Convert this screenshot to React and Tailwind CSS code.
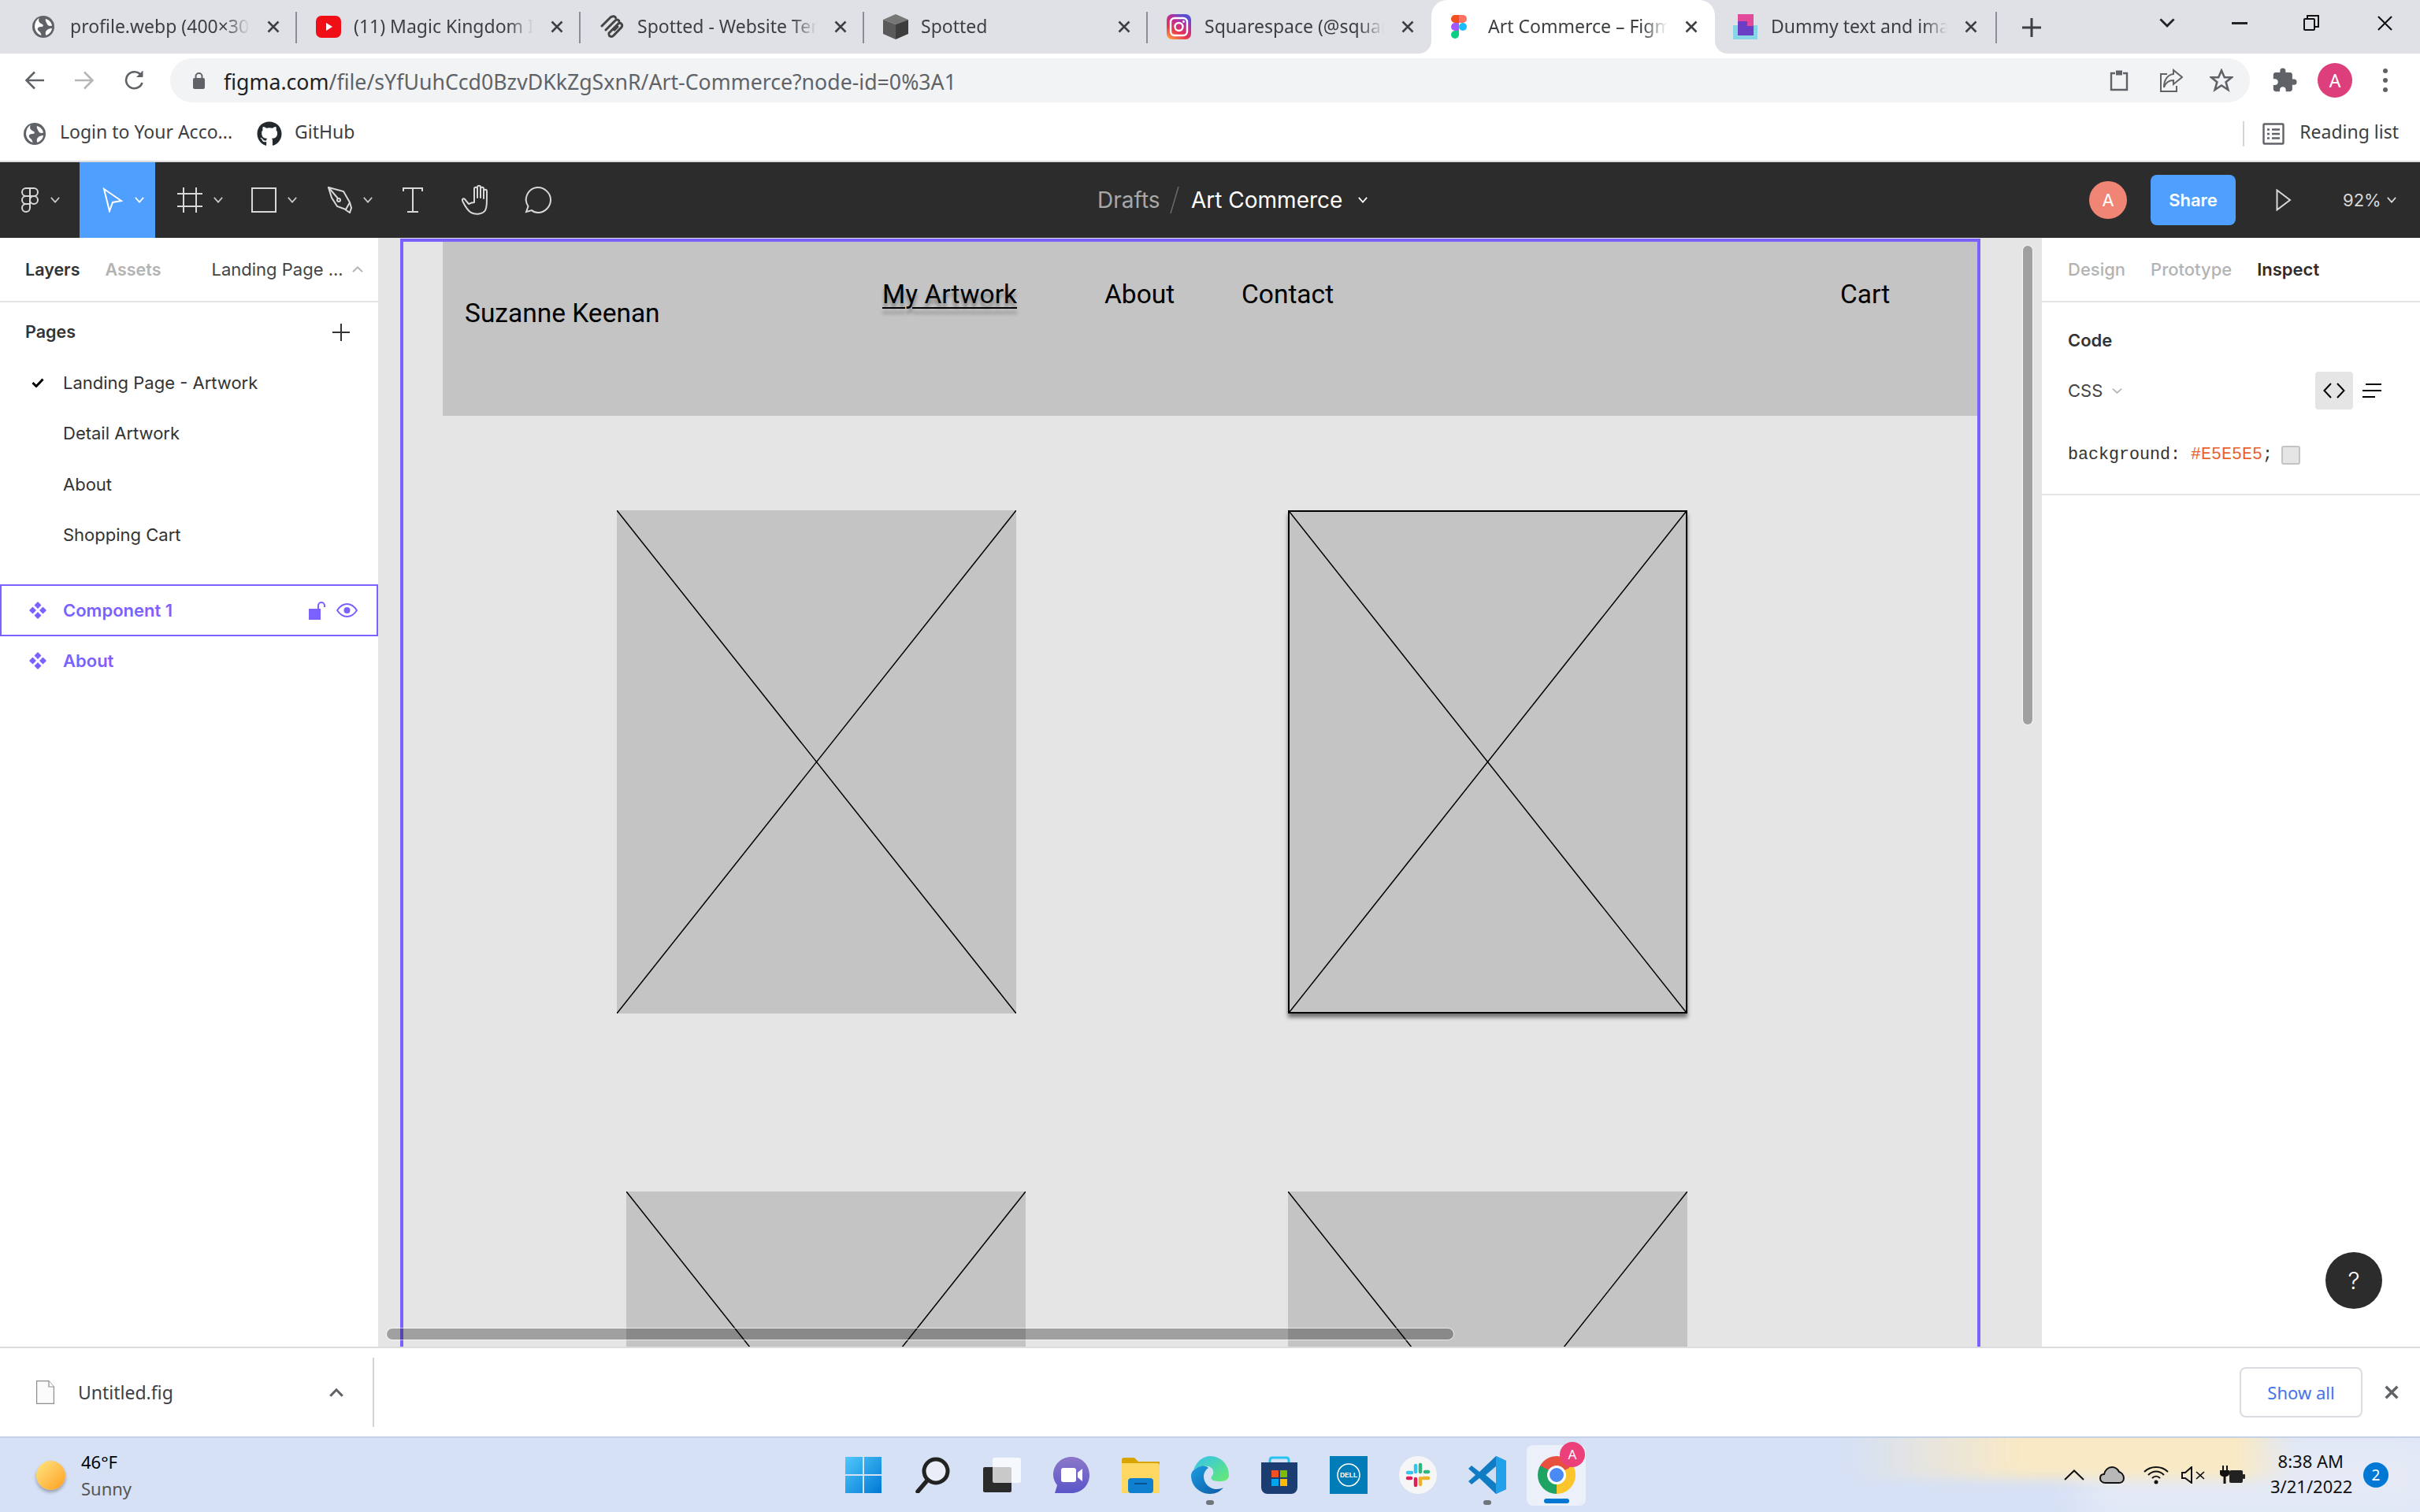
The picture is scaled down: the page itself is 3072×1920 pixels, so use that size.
import React from 'react';
import { FaGithub } from 'react-icons/fa';
import { MdExtension } from 'react-icons/md';

// ---- small helpers ----
const Chev = ({ className = '', up = false, color = '#d4d4d4', w = 14, h = 9, sw = 2 }) => (
  <svg className={`shrink-0 ${className}`} width={w} height={h} viewBox="0 0 14 9" fill="none" preserveAspectRatio="none">
    <path d={up ? 'M1 8L7 1.5L13 8' : 'M1 1L7 7.5L13 1'} stroke={color} strokeWidth={sw} />
  </svg>
);

const CloseX = ({ className = '', color = '#3c4043', size = 16, sw = 2.6 }) => (
  <svg className={`shrink-0 ${className}`} width={size} height={size} viewBox="0 0 16 16" fill="none">
    <path d="M1.5 1.5L14.5 14.5M14.5 1.5L1.5 14.5" stroke={color} strokeWidth={sw} />
  </svg>
);

const Globe = ({ size = 28 }) => (
  <svg className="shrink-0" width={size} height={size} viewBox="0 0 28 28">
    <circle cx="14" cy="14" r="14" fill="#5f6368" />
    <path d="M9 2.5C7 6 8.5 9 12 10.5C15 11.5 14 14 11.5 14C8 14 6 15.5 7 18C8 20 11 20.5 11.5 25C8 24 3.5 20.5 3 14C3 9 5 5 9 2.5ZM17 4C21 5 24.5 8.5 25 12.5C22 13.5 19.5 12.5 18.5 10C18 8 16 6.5 17 4ZM25 16C24.5 20 21.5 23.5 17.5 25C16 22 17 19 19.5 17.5C21.5 16.5 23 16 25 16Z" fill="#fff" />
  </svg>
);

const YouTube = () => (
  <svg className="shrink-0" width="32" height="28" viewBox="0 0 32 28">
    <rect width="32" height="28" rx="7" fill="#f00f16" />
    <path d="M13 9L21 14L13 19Z" fill="#fff" />
  </svg>
);

const Squarespace = () => (
  <svg className="shrink-0" width="32" height="32" viewBox="0 0 32 32" fill="none" stroke="#444" strokeWidth="3" strokeLinecap="round">
    <path d="M3 15L14 4C17 1.5 20 3 20.5 4.5M8 20L20 8C22 6 25 7 25 10M12 24L24 12C27 10 30 13 28 16.5L18 27C15.5 29.5 12.5 28.5 12 26M6 12L13 5M19 20L23 16" />
  </svg>
);

const Cube = () => (
  <svg className="shrink-0" width="32" height="32" viewBox="0 0 32 32">
    <path d="M16 0L32 7L16 13L0 7Z" fill="#777" />
    <path d="M0 7L16 13V32L0 25Z" fill="#5a5a5a" />
    <path d="M32 7L16 13V32L32 25Z" fill="#3d3d3d" />
  </svg>
);

const Instagram = () => (
  <svg className="shrink-0" width="31" height="32" viewBox="0 0 31 32">
    <defs>
      <linearGradient id="ig" x1="0" y1="1" x2="0.6" y2="0">
        <stop offset="0" stopColor="#fdb040" />
        <stop offset="0.4" stopColor="#e8354f" />
        <stop offset="0.75" stopColor="#b82f9e" />
        <stop offset="1" stopColor="#5a4fd0" />
      </linearGradient>
    </defs>
    <rect width="31" height="32" rx="7" fill="url(#ig)" />
    <rect x="5" y="5" width="21" height="22" rx="5" fill="none" stroke="#fff" strokeWidth="2.4" />
    <circle cx="15.5" cy="16" r="5" fill="none" stroke="#fff" strokeWidth="2.4" />
    <circle cx="21.5" cy="9.5" r="1.4" fill="#fff" />
  </svg>
);

const FigmaColor = () => (
  <svg className="shrink-0" width="22" height="30" viewBox="0 0 20 30">
    <path d="M10 0H5a5 5 0 0 0 0 10h5Z" fill="#f24e1e" />
    <path d="M10 0h5a5 5 0 0 1 0 10h-5Z" fill="#ff7262" />
    <path d="M10 10H5a5 5 0 0 0 0 10h5Z" fill="#a259ff" />
    <circle cx="15" cy="15" r="5" fill="#1abcfe" />
    <path d="M10 20H5a5 5 0 1 0 5 5Z" fill="#0acf83" />
  </svg>
);

const DummyLogo = () => (
  <svg className="shrink-0" width="31" height="32" viewBox="0 0 31 32">
    <rect x="0" y="14" width="31" height="18" fill="#86d6e6" />
    <rect x="6" y="0" width="20" height="16" fill="#e2489b" />
    <path d="M6 9H18V15H26V27H6Z" fill="#6b3fc4" />
  </svg>
);

const Tab = ({ icon, title, sep = true, active = false }) => (
  <div className={`relative flex h-[68px] w-[360px] shrink-0 items-center pl-[24px] ${active ? 'rounded-t-[20px] bg-white' : ''}`}>
    {active && <span className="absolute bottom-0 left-[-16px] h-4 w-4 bg-[radial-gradient(circle_at_0_0,transparent_15.5px,white_16.5px)]" />}
    {active && <span className="absolute bottom-0 right-[-16px] h-4 w-4 bg-[radial-gradient(circle_at_100%_0,transparent_15.5px,white_16.5px)]" />}
    <span className="flex w-[48px] shrink-0 items-center">{icon}</span>
    <span className="w-[240px] shrink-0 -translate-y-[1px] whitespace-nowrap text-[23px] leading-[30px] text-[#3c4043] [mask-image:linear-gradient(to_right,black_82%,transparent_95%)]">{title}</span>
    <CloseX className="ml-[10px]" />
    {sep && <span className="absolute right-0 top-[15px] h-10 w-[2px] bg-[#8c9096]" />}
  </div>
);

const TabStrip = () => (
  <div className="flex h-[68px] shrink-0 bg-[#dfe1e6] pl-[17px]">
    <Tab icon={<Globe />} title="profile.webp (400×30" />
    <Tab icon={<YouTube />} title="(11) Magic Kingdom It" />
    <Tab icon={<Squarespace />} title="Spotted - Website Ten" />
    <Tab icon={<Cube />} title="Spotted" />
    <Tab icon={<Instagram />} title="Squarespace (@squar" sep={false} />
    <Tab icon={<FigmaColor />} title="Art Commerce – Figm" sep={false} active />
    <div className="relative flex h-[68px] w-[358px] shrink-0 items-center pl-[23px]">
      <span className="flex w-[48px] shrink-0 items-center"><DummyLogo /></span>
      <span className="w-[236px] shrink-0 -translate-y-[1px] whitespace-nowrap text-[23px] leading-[30px] text-[#3c4043] [mask-image:linear-gradient(to_right,black_82%,transparent_95%)]">Dummy text and imag</span>
      <CloseX className="ml-[10px]" />
      <span className="absolute right-0 top-[15px] h-10 w-[2px] bg-[#8c9096]" />
    </div>
    <svg className="ml-[31px] mt-[22px] shrink-0" width="26" height="26" viewBox="0 0 26 26"><path d="M13 1V25M1 13H25" stroke="#3c4043" strokeWidth="3" /></svg>
    <div className="ml-[149px] mt-[23px] flex items-start">
      <Chev color="#222" w={20} h={12} />
      <span className="ml-[72px] mt-[5px] h-[3px] w-5 bg-[#222]" />
      <svg className="ml-[71px] mt-[-4px]" width="20" height="20" viewBox="0 0 20 20" fill="none" stroke="#111" strokeWidth="2"><rect x="1" y="5" width="13" height="14" rx="1" /><path d="M5 5V1H19V15H14" /></svg>
      <CloseX className="ml-[73px] mt-[-4px]" color="#111" size={21} sw={1.6} />
    </div>
  </div>
);

const AddressRow = () => (
  <div className="flex h-[68px] shrink-0 items-center bg-white">
    <svg className="ml-[31px]" width="26" height="24" viewBox="0 0 26 24" fill="none" stroke="#5f6368" strokeWidth="2.6"><path d="M25 12H3M13 1.5L2.5 12L13 22.5" /></svg>
    <svg className="ml-[37px]" width="26" height="24" viewBox="0 0 26 24" fill="none" stroke="#b4b6b9" strokeWidth="2.6"><path d="M1 12H23M13 1.5L23.5 12L13 22.5" /></svg>
    <svg className="ml-[38px]" width="26" height="26" viewBox="0 0 26 26" fill="none" stroke="#5f6368" strokeWidth="2.6"><path d="M22.5 16A10.5 10.5 0 1 1 21 6.5" /><path d="M23 1V8.5H15.5" fill="#5f6368" strokeWidth="1" /></svg>
    <div className="ml-[32px] flex h-14 w-[2640px] items-center rounded-full bg-[#f1f3f5] pl-[29px]">
      <svg width="15" height="22" viewBox="0 0 15 22"><path d="M3.5 9V6a4 4 0 0 1 8 0v3" fill="none" stroke="#5f6368" strokeWidth="2" /><rect y="8" width="15" height="14" rx="2" fill="#5f6368" /></svg>
      <span className="ml-[24px] translate-y-[2px] whitespace-nowrap text-[26.7px] leading-[36px] text-[#5f6368]"><span className="text-[#202124]">figma.com</span>/file/sYfUuhCcd0BzvDKkZgSxnR/Art-Commerce?node-id=0%3A1</span>
      <svg className="ml-auto" width="24" height="28" viewBox="0 0 24 28" fill="none" stroke="#5f6368" strokeWidth="2.4"><path d="M7 5H2V26H22V5H17" /><rect x="8" y="1.5" width="8" height="6" fill="#5f6368" stroke="none" /></svg>
      <svg className="ml-[39px]" width="30" height="30" viewBox="0 0 30 30" fill="none" stroke="#5f6368" strokeWidth="2"><path d="M10 7H2V29H22V22" /><path d="M18 2L29 11L18 20V15C12 15 8 18 6 24C6 15 10 8 18 7Z" /></svg>
      <svg className="ml-[34px]" width="30" height="30" viewBox="0 0 30 30" fill="none" stroke="#5f6368" strokeWidth="2.6"><path d="M15 2.5L18.8 11.2H28L20.6 17.2L23.4 27L15 21.5L6.6 27L9.4 17.2L2 11.2H11.2Z" /></svg>
      <span className="mr-[21px] w-0" />
    </div>
    <MdExtension className="ml-[27px] shrink-0 text-[#5f6368]" size={34} />
    <span className="ml-[25px] flex h-11 w-11 shrink-0 items-center justify-center rounded-full bg-[#dc3f7c] text-[23px] text-white">A</span>
    <span className="ml-[39px] flex shrink-0 flex-col gap-[6px]">
      <i className="block h-[6px] w-[6px] rounded-full bg-[#5f6368]" />
      <i className="block h-[6px] w-[6px] rounded-full bg-[#5f6368]" />
      <i className="block h-[6px] w-[6px] rounded-full bg-[#5f6368]" />
    </span>
  </div>
);

const BookmarkRow = () => (
  <div className="flex h-[68px] shrink-0 items-center bg-white pl-[30px] text-[23px] text-[#3c4043]">
    <Globe />
    <span className="ml-[18px] w-[217px] -translate-y-[3px] whitespace-nowrap">Login to Your Acco...</span>
    <FaGithub className="ml-[33px] shrink-0 text-[#24292e]" size={32} />
    <span className="ml-[16px] -translate-y-[3px] whitespace-nowrap">GitHub</span>
    <span className="ml-auto h-8 w-[2px] bg-[#d4d4d4]" />
    <svg className="ml-[23px]" width="28" height="28" viewBox="0 0 28 28" fill="none" stroke="#5f6368" strokeWidth="2.4"><rect x="1.5" y="1.5" width="25" height="25" rx="1" /><path d="M6 8.5H9M12 8.5H22M6 14H9M12 14H22M6 19.5H9M12 19.5H22" /></svg>
    <span className="ml-[19px] mr-[27px] -translate-y-[3px] whitespace-nowrap">Reading list</span>
  </div>
);

// ---- figma toolbar ----
const ToolIcon = ({ children, chev = true, className = '' }) => (
  <div className={`flex items-center ${className}`}>
    {children}
    {chev && <Chev className="ml-[14px]" color="#c8c8c8" w={12} h={8} />}
  </div>
);

const FigmaToolbar = () => (
  <div className="flex h-[96px] shrink-0 items-center border-t-0 bg-[#2c2c2c] font-['Inter',sans-serif]">
    <ToolIcon className="ml-[26px]">
      <svg width="24" height="32" viewBox="0 0 24 32" fill="none" stroke="#d8d8d8" strokeWidth="2"><path d="M12 1H7a5 5 0 0 0 0 10h5ZM12 1h5a5 5 0 0 1 0 10h-5ZM12 11H7a5 5 0 0 0 0 10h5Z" /><circle cx="17" cy="16" r="5" /><path d="M12 21H7a5 5 0 1 0 5 5Z" /></svg>
    </ToolIcon>
    <div className="ml-[25px] flex h-[96px] w-[96px] items-center bg-[#4f9fff] pl-[29px]">
      <svg width="26" height="32" viewBox="0 0 26 32" fill="none" stroke="#fff" strokeWidth="2"><path d="M2 2L24 17L13 19L9 30Z" /></svg>
      <Chev className="ml-[15px]" color="#fff" w={12} h={8} />
    </div>
    <ToolIcon className="ml-[28px]">
      <svg width="32" height="32" viewBox="0 0 32 32" fill="none" stroke="#d8d8d8" strokeWidth="2"><path d="M8 0V32M24 0V32M0 8H32M0 24H32" /></svg>
    </ToolIcon>
    <ToolIcon className="ml-[36px]">
      <svg width="32" height="32" viewBox="0 0 32 32" fill="none" stroke="#d8d8d8" strokeWidth="2"><rect x="1" y="1" width="30" height="30" /></svg>
    </ToolIcon>
    <ToolIcon className="ml-[39px]">
      <svg width="31" height="34" viewBox="0 0 31 34" fill="none" stroke="#d8d8d8" strokeWidth="2"><path d="M1 1L20 6L28 20L23 29L12 25L5 14Z" /><path d="M1 1L13 15" /><circle cx="14" cy="17" r="2" /><path d="M22 29L28 33L30 27L28 20" /></svg>
    </ToolIcon>
    <ToolIcon chev={false} className="ml-[38px]">
      <svg width="26" height="32" viewBox="0 0 26 32" fill="none" stroke="#d8d8d8" strokeWidth="2"><path d="M0 1H26M13 1V31M6 31H20" /><path d="M1 1V5M25 1V5" /></svg>
    </ToolIcon>
    <ToolIcon chev={false} className="ml-[49px]">
      <svg width="36" height="38" viewBox="0 0 36 38" fill="none" stroke="#d8d8d8" strokeWidth="2" strokeLinecap="round" strokeLinejoin="round"><path d="M9 24L4 18C2 16 0 18 1.500 21C4 26 7 32 12 35C18 38 27 37 30 32C32 28 32 24 32 8C32 5 28 5 28 8V17V5C28 2 24 2 24 5V16V3C24 0 20 0 20 3V16V5C20 2 16 2 16 5V22C13 22 11 23 9 24Z" /></svg>
    </ToolIcon>
    <ToolIcon chev={false} className="ml-[44px]">
      <svg width="34" height="34" viewBox="0 0 34 34" fill="none" stroke="#d8d8d8" strokeWidth="2"><path d="M2 32L4.500 25C2 21 1 18 2 14C3.500 6 10 1 17 1C25 1 33 8 33 17C33 25 26 33 17 33C14 33 11 32 9 30Z" /></svg>
    </ToolIcon>

    {/* title sits in the middle of the bar */}
    <div className="ml-[693px] flex items-center text-[28px] leading-[34px]">
      <span className="w-[80px] whitespace-nowrap text-[#a8a8a8]">Drafts</span>
      <svg className="ml-[10px]" width="14" height="34" viewBox="0 0 14 34"><path d="M13 0L3 34" stroke="#6a6a6a" strokeWidth="1.5" /></svg>
      <span className="ml-[15px] w-[191px] whitespace-nowrap text-white">Art Commerce</span>
      <Chev className="ml-[21px]" color="#fff" w={12} h={8} />
    </div>

    <span className="ml-auto flex h-12 w-12 items-center justify-center rounded-full bg-[#f08575] text-[22px] text-white">A</span>
    <span className="ml-[30px] flex h-16 w-[108px] items-center justify-center rounded-lg bg-[#4f9fff] text-[22px] font-semibold text-white">Share</span>
    <svg className="ml-[51px]" width="20" height="28" viewBox="0 0 20 28" fill="none" stroke="#d8d8d8" strokeWidth="2"><path d="M1.500 1.500L18 14L1.500 26.500Z" /></svg>
    <span className="ml-[65px] w-[44px] whitespace-nowrap text-[22px] text-[#d8d8d8]">92%</span>
    <Chev className="ml-[12px] mr-[30px]" color="#d8d8d8" w={12} h={8} />
  </div>
);

// ---- layers panel ----
const ComponentGlyph = () => (
  <svg className="shrink-0" width="22" height="22" viewBox="0 0 22 22" fill="#7b61ff">
    <path d="M11 0L15.500 4.500L11 9L6.500 4.500ZM11 13L15.500 17.500L11 22L6.500 17.500ZM4.500 6.500L9 11L4.500 15.500L0 11ZM17.500 6.500L22 11L17.500 15.500L13 11Z" />
  </svg>
);

const PageRow = ({ name, checked }) => (
  <div className="flex h-[64.5px] items-center">
    <span className="flex w-[80px] justify-center pl-[16px]">
      {checked && <svg className="mr-[0px]" width="16" height="12" viewBox="0 0 16 12" fill="none"><path d="M1.500 6L6 10.500L14.500 1.500" stroke="#000" strokeWidth="3" /></svg>}
    </span>
    <span className="whitespace-nowrap text-[#333]">{name}</span>
  </div>
);

const LeftPanel = () => (
  <aside className="flex w-[480px] shrink-0 flex-col bg-white font-['Inter',sans-serif] text-[22px]">
    <div className="flex h-[82px] shrink-0 items-center border-b-2 border-[#e5e5e5] pl-[32px]">
      <span className="text-[21.5px] font-semibold text-[#333]">Layers</span>
      <span className="ml-[32px] text-[21.5px] font-semibold text-[#b3b3b3]">Assets</span>
      <span className="ml-[64px] whitespace-nowrap text-[#444]">Landing Page ...</span>
      <Chev className="ml-[11px]" up color="#b3b3b3" w={14} h={8} />
    </div>
    <div className="flex h-[70px] shrink-0 items-center pl-[32px] pr-[36px] pt-[5px]">
      <span className="text-[21.5px] font-semibold text-[#333]">Pages</span>
      <svg className="ml-auto" width="22" height="22" viewBox="0 0 22 22"><path d="M11 0V22M0 11H22" stroke="#333" strokeWidth="2" /></svg>
    </div>
    <PageRow name="Landing Page - Artwork" checked />
    <PageRow name="Detail Artwork" />
    <PageRow name="About" />
    <PageRow name="Shopping Cart" />
    <div className="mt-[30px] flex h-[66px] shrink-0 items-center border-2 border-[#7b61ff] pl-[35px] font-semibold text-[#7b61ff]">
      <ComponentGlyph />
      <span className="ml-[21px] whitespace-nowrap">Component 1</span>
      <svg className="ml-auto" width="21" height="23" viewBox="0 0 21 23"><rect y="9" width="15" height="14" fill="#7b61ff" /><path d="M12 9V5a4 4 0 0 1 8 0v2" fill="none" stroke="#7b61ff" strokeWidth="2" /></svg>
      <svg className="ml-[14px] mr-[24px]" width="27" height="18" viewBox="0 0 27 18"><path d="M1 9C5 3 9 1 13.500 1S22 3 26 9C22 15 18 17 13.500 17S5 15 1 9Z" fill="none" stroke="#7b61ff" strokeWidth="2" /><circle cx="13.500" cy="9" r="4" fill="#7b61ff" /></svg>
    </div>
    <div className="flex h-[62px] shrink-0 items-center pl-[37px] font-semibold text-[#7b61ff]">
      <ComponentGlyph />
      <span className="ml-[21px]">About</span>
    </div>
  </aside>
);

// ---- canvas ----
const Placeholder = ({ className = '' }) => (
  <div className={`h-[639px] w-[507px] shrink-0 bg-[#c4c4c4] ${className}`}>
    <svg className="block h-full w-full" viewBox="0 0 507 639" preserveAspectRatio="none" fill="none">
      <path d="M0 0L507 639M507 0L0 639" stroke="#000" strokeWidth="1.5" />
    </svg>
  </div>
);

const Canvas = () => (
  <main className="relative min-w-0 flex-1 overflow-hidden bg-[#e5e5e5] font-['Roboto',sans-serif] text-[33.500px] leading-[42px] text-black">
    <div className="ml-[28px] mt-[1px] h-full w-[2006px] border-x-4 border-t-4 border-[#7b61ff]">
      <div className="ml-[50px] flex h-[221px] bg-[#c4c4c4]">
        <span className="ml-[28px] mt-[70px] w-[250px] whitespace-nowrap">Suzanne Keenan</span>
        <span className="ml-[280px] mt-[46px] w-[170px] whitespace-nowrap underline decoration-2 underline-offset-[5px] [text-shadow:0_6px_4px_rgba(0,0,0,0.35)]">My Artwork</span>
        <span className="ml-[112px] mt-[46px] w-[89px]">About</span>
        <span className="ml-[85px] mt-[46px] w-[117px]">Contact</span>
        <span className="ml-[643px] mt-[46px]">Cart</span>
      </div>
      <div className="ml-[271px] mt-[120px] flex">
        <Placeholder />
        <Placeholder className="ml-[345px] border-2 border-black shadow-[0_5px_5px_rgba(0,0,0,0.5)]" />
      </div>
      <div className="ml-[283px] mt-[226px] flex">
        <Placeholder />
        <Placeholder className="ml-[333px]" />
      </div>
    </div>
    {/* overlay scrollbars */}
    <div className="absolute left-[11px] top-[1385px] h-[14px] w-[1354px] rounded-full bg-black/30 ring-1 ring-white/60" />
    <div className="absolute left-[2088px] top-[10px] h-[608px] w-[12px] rounded-full bg-black/30 ring-1 ring-white/60" />
  </main>
);

// ---- inspect panel ----
const RightPanel = () => (
  <aside className="relative w-[480px] shrink-0 bg-white font-['Inter',sans-serif] text-[22px]">
    <div className="flex h-[82px] items-center border-b-2 border-[#e5e5e5] pl-[33px] font-medium">
      <span className="text-[#b3b3b3]">Design</span>
      <span className="ml-[32px] text-[#b3b3b3]">Prototype</span>
      <span className="ml-[32px] font-semibold text-[#2c2c2c]">Inspect</span>
    </div>
    <div className="h-[245px] border-b-2 border-[#e5e5e5] pl-[33px]">
      <div className="pt-[35px] font-semibold leading-[26px] text-[#333]">Code</div>
      <div className="mt-[27px] flex h-12 items-center">
        <span className="text-[#444]">CSS</span>
        <Chev className="ml-[12px]" color="#b3b3b3" w={13} h={7} />
        <span className="ml-[245px] flex h-12 w-12 items-center justify-center rounded-[4px] bg-[#e5e5e5]">
          <svg width="28" height="20" viewBox="0 0 28 20" fill="none" stroke="#000" strokeWidth="2"><path d="M10 1L1.500 10L10 19M18 1L26.500 10L18 19" /></svg>
        </span>
        <svg className="ml-[12px]" width="24" height="18" viewBox="0 0 24 18" fill="none" stroke="#000" strokeWidth="2"><path d="M4 1H24M0 9H24M0 17H16" /></svg>
      </div>
      <div className="mt-[46px] flex items-center font-['Liberation_Mono',monospace] text-[21.67px] leading-[24px] text-[#333]">
        <span className="whitespace-pre">background: <span className="text-[#e8602c]">#E5E5E5</span>;</span>
        <span className="ml-[11px] h-6 w-6 rounded-[3px] border-2 border-[#c4c4c4] bg-[#e5e5e5]" />
      </div>
    </div>
    <span className="absolute left-[360px] top-[1288px] flex h-[72px] w-[72px] items-center justify-center rounded-full bg-[#2c2c2c] text-[30px] font-light text-white">?</span>
  </aside>
);

const DownloadBar = () => (
  <div className="flex h-[114px] shrink-0 items-center border-t-2 border-[#dcdcdc] bg-white text-[23px] text-[#3c4043]">
    <svg className="ml-[46px]" width="23" height="30" viewBox="0 0 23 30" fill="#fbfbfb" stroke="#8a8d91" strokeWidth="1.200"><path d="M0.600 0.600H16L22.400 8V29.400H0.600Z" /><path d="M16 0.600V8H22.400" /></svg>
    <span className="ml-[30px] w-[130px] whitespace-nowrap">Untitled.fig</span>
    <Chev className="ml-[189px]" up color="#5f6368" w={18} h={11} sw={2.4} />
    <span className="ml-[37px] h-[88px] w-[2px] bg-[#d4d4d4]" />
    <span className="ml-auto flex h-16 w-[156px] items-center justify-center rounded-lg border-2 border-[#dadce0] text-[22px] text-[#4473e8]">Show all</span>
    <CloseX className="ml-[28px] mr-[27px]" color="#5f6368" size={18} sw={3} />
  </div>
);

// ---- taskbar glyphs ----
const WinStart = () => (
  <svg width="46" height="46" viewBox="0 0 46 46">
    <defs><linearGradient id="win" x1="0" y1="0" x2="1" y2="1"><stop offset="0" stopColor="#4fc8fb" /><stop offset="1" stopColor="#0078d4" /></linearGradient></defs>
    <path d="M0 0H22V22H0ZM24 0H46V22H24ZM0 24H22V46H0ZM24 24H46V46H24Z" fill="url(#win)" />
  </svg>
);
const SearchIcon = () => (
  <svg width="44" height="46" viewBox="0 0 44 46" fill="none"><circle cx="26" cy="18" r="15" fill="#e9eef8" stroke="#222" strokeWidth="5" /><path d="M15 30L3 44" stroke="#222" strokeWidth="5.500" strokeLinecap="round" /></svg>
);
const TaskView = () => (
  <svg width="48" height="44" viewBox="0 0 48 44"><rect y="12" width="36" height="32" rx="2" fill="#2b2b2b" /><rect x="12" width="36" height="32" rx="2" fill="#fff" fillOpacity="0.75" /></svg>
);
const ChatIcon = () => (
  <svg width="46" height="46" viewBox="0 0 46 46"><defs><linearGradient id="chat" x1="0" y1="0" x2="0" y2="1"><stop offset="0" stopColor="#8c78c8" /><stop offset="1" stopColor="#5a55c8" /></linearGradient></defs><path d="M23 0C36 0 46 10 46 23S36 46 23 46H2L5 36C2 32 0 28 0 23C0 10 10 0 23 0Z" fill="url(#chat)" /><rect x="10" y="14" width="19" height="18" rx="3" fill="#fff" /><path d="M31 20L37 15V31L31 26Z" fill="#fff" /></svg>
);
const FolderIcon = () => (
  <svg width="48" height="46" viewBox="0 0 48 46"><path d="M0 4a3 3 0 0 1 3-3H16L21 6H48V12H0Z" fill="#d9a300" /><path d="M0 8H45a3 3 0 0 1 3 3V46H0Z" fill="#ffd763" /><rect x="8" y="27" width="32" height="19" rx="4" fill="#0f7fd0" /><path d="M16 34H32" stroke="#07518f" strokeWidth="2" /></svg>
);
const EdgeIcon = () => (
  <svg width="48" height="48" viewBox="0 0 48 48"><defs><linearGradient id="edgeA" x1="0" y1="0" x2="1" y2="1"><stop offset="0" stopColor="#35c1f1" /><stop offset="1" stopColor="#66eb6e" /></linearGradient><linearGradient id="edgeB" x1="0" y1="0" x2="1" y2="1"><stop offset="0" stopColor="#1b9de2" /><stop offset="1" stopColor="#0c59a4" /></linearGradient></defs><path d="M3 18C7 6 16 0 24 0C38 0 48 11 48 24C48 31 42 32 36 32C30 32 24 31 26 26C30 22 29 14 21 13C12 12 5 15 3 18Z" fill="url(#edgeA)" /><path d="M3 18C9 12 17 11 22 15C19 17 16 21 16 26C16 35 24 42 32 42C36 42 39 41 41 40C37 45 31 48 24 48C10 48 0 37 0 25C0 22 1 20 3 18Z" fill="url(#edgeB)" /></svg>
);
const StoreIcon = () => (
  <svg width="46" height="48" viewBox="0 0 46 48"><path d="M11 10V5a3 3 0 0 1 3-3H32a3 3 0 0 1 3 3V10" fill="none" stroke="#27c3f0" strokeWidth="3" /><path d="M0 8H46V40a8 8 0 0 1-8 8H8a8 8 0 0 1-8-8Z" fill="#1b3d72" /><rect x="13" y="18" width="9" height="9" fill="#f25022" /><rect x="24" y="18" width="9" height="9" fill="#7fba00" /><rect x="13" y="29" width="9" height="9" fill="#00a4ef" /><rect x="24" y="29" width="9" height="9" fill="#ffb900" /></svg>
);
const DellIcon = () => (
  <svg width="48" height="48" viewBox="0 0 48 48"><rect width="48" height="48" fill="#007db8" /><circle cx="24" cy="24" r="14" fill="none" stroke="#fff" strokeWidth="1.500" /><text x="24" y="27" textAnchor="middle" fontSize="8.500" fontWeight="700" fill="#fff" fontFamily="Liberation Sans">DELL</text></svg>
);
const SlackIcon = () => (
  <svg width="48" height="48" viewBox="0 0 48 48"><circle cx="24" cy="24" r="24" fill="#f6f6f6" /><g strokeWidth="4.500" strokeLinecap="round" fill="none"><path d="M21 12V20M11 21H16" stroke="#36c5f0" /><path d="M27 11V20M37 20H33" stroke="#2eb67d" /><path d="M27 36V28M37 28H31" stroke="#ecb22e" /><path d="M21 37V29M11 28H15" stroke="#e01e5a" /></g></svg>
);
const VsCodeIcon = () => (
  <svg width="48" height="48" viewBox="0 0 48 48"><path d="M35 0L48 6V42L35 48L14 28L4 36L0 32L9 24L0 16L4 12L14 20Z" fill="#0f7cc4" /><path d="M35 0L48 6V42L35 48Z" fill="#21a1ea" /><path d="M35 13L22 24L35 35Z" fill="#e0e8f8" fillOpacity="0.9" /></svg>
);
const ChromeIcon = () => (
  <div className="relative h-12 w-12">
    <span className="absolute inset-0 rounded-full bg-[conic-gradient(#e8503f_0deg_60deg,#fbc52c_60deg_180deg,#1fa363_180deg_300deg,#e8503f_300deg)]" />
    <span className="absolute inset-[12px] rounded-full border-[3px] border-white bg-[#4a8af4]" />
    <span className="absolute right-[-12px] top-[-18px] flex h-8 w-8 items-center justify-center rounded-full bg-[#ec407a] text-[17px] text-white">A</span>
  </div>
);

const Slot = ({ children, dot, active }) => (
  <div className="relative flex h-full w-[88px] items-center justify-center pb-[1px]">
    {active && <span className="absolute left-[6px] top-[9px] h-[77px] w-[72px] rounded-lg bg-white/50 shadow-[3px_0_0_rgba(255,255,255,0.5)]" />}
    <span className="relative flex items-center justify-center">{children}</span>
    {dot && <span className="absolute bottom-[9px] h-[6px] w-[10px] rounded-full bg-[#70757d]" />}
    {active && <span className="absolute bottom-[11px] h-[6px] w-8 rounded-full bg-[#0078d4]" />}
  </div>
);

const Taskbar = () => (
  <div className="relative flex h-[96px] shrink-0 overflow-hidden border-t-2 border-[#c5d2e6] bg-[#d6e1f6] text-black">
    {/* glow from the wallpaper behind the tray */}
    <div className="absolute left-[2640px] top-[-10px] h-[120px] w-[460px] bg-[#e4e9f5] blur-[24px]" />
    <div className="absolute left-[2340px] top-[-30px] h-[82px] w-[570px] bg-[linear-gradient(to_right,transparent,#f9e9c4_40%,#f9e9c4_88%,transparent)] blur-[8px]" />
    <div className="relative flex w-[1052px] shrink-0 items-center pl-[46px]">
      <span className="h-[37px] w-[37px] rounded-full bg-gradient-to-br from-[#ffe680] to-[#ff9e00] shadow-[0_3px_4px_rgba(0,0,0,0.3)]" />
      <div className="ml-[20px] text-[22px] leading-[34px]">
        <div>46°F</div>
        <div className="text-[#555]">Sunny</div>
      </div>
    </div>
    <div className="relative flex">
      <Slot><WinStart /></Slot>
      <Slot><SearchIcon /></Slot>
      <Slot><TaskView /></Slot>
      <Slot><ChatIcon /></Slot>
      <Slot><FolderIcon /></Slot>
      <Slot dot><EdgeIcon /></Slot>
      <Slot><StoreIcon /></Slot>
      <Slot><DellIcon /></Slot>
      <Slot><SlackIcon /></Slot>
      <Slot dot><VsCodeIcon /></Slot>
      <Slot active><ChromeIcon /></Slot>
    </div>
    <div className="relative flex flex-1 items-center justify-end text-[22px] leading-[32px] text-[#111]">
      <svg width="26" height="14" viewBox="0 0 26 14" fill="none" stroke="#111" strokeWidth="2"><path d="M1 13L13 1.500L25 13" /></svg>
      <svg className="ml-[19px]" width="32" height="22" viewBox="0 0 32 22"><path d="M8 21C3 21 1 18 1 15C1 12 3 10 6 10C7 5 11 1 16 1C20 1 23 3 25 7C28 8 31 11 31 15C31 19 28 21 25 21Z" fill="#b8b8b8" stroke="#111" strokeWidth="2" /></svg>
      <svg className="ml-[24px]" width="32" height="24" viewBox="0 0 32 24" fill="none" stroke="#111" strokeWidth="2"><path d="M1 8C9 0 23 0 31 8M6 12C12 6 20 6 26 12M11 16C14 13 18 13 21 16" /><circle cx="16" cy="21" r="2.500" fill="#111" stroke="none" /></svg>
      <svg className="ml-[16px]" width="30" height="22" viewBox="0 0 30 22" fill="none" stroke="#111" strokeWidth="2"><path d="M1 8V15H5L13 21V1L5 8Z" /><path d="M19 7L29 16M29 7L19 16" strokeWidth="1.600" /></svg>
      <svg className="ml-[19px]" width="32" height="24" viewBox="0 0 32 24"><path d="M3 0H5V6H8V0H10V6H12V10C12 13 9 14 7.500 14V23H4.500V14C3 14 0 13 0 10V6H3Z" fill="#111" /><rect x="12" y="6" width="17" height="16" rx="2" fill="#222" /><rect x="29" y="11" width="3" height="6" rx="1" fill="#222" /></svg>
      <div className="ml-[32px] w-[93px] -translate-y-[2px] text-right">
        <div className="whitespace-nowrap">8:38 AM</div>
        <div className="whitespace-nowrap">3/21/2022</div>
      </div>
      <span className="ml-[25px] mr-[40px] flex h-8 w-8 items-center justify-center rounded-full bg-[#0078d4] text-[19px] text-white">2</span>
    </div>
  </div>
);

const App = () => (
  <div className="flex h-[1920px] w-[3072px] flex-col overflow-hidden bg-white font-['Noto_Sans',sans-serif]">
    <TabStrip />
    <AddressRow />
    <BookmarkRow />
    <div className="h-[2px] shrink-0 bg-[#dcdcdc]" />
    <FigmaToolbar />
    <div className="flex min-h-0 flex-1">
      <LeftPanel />
      <Canvas />
      <RightPanel />
    </div>
    <DownloadBar />
    <Taskbar />
  </div>
);

export default App;
